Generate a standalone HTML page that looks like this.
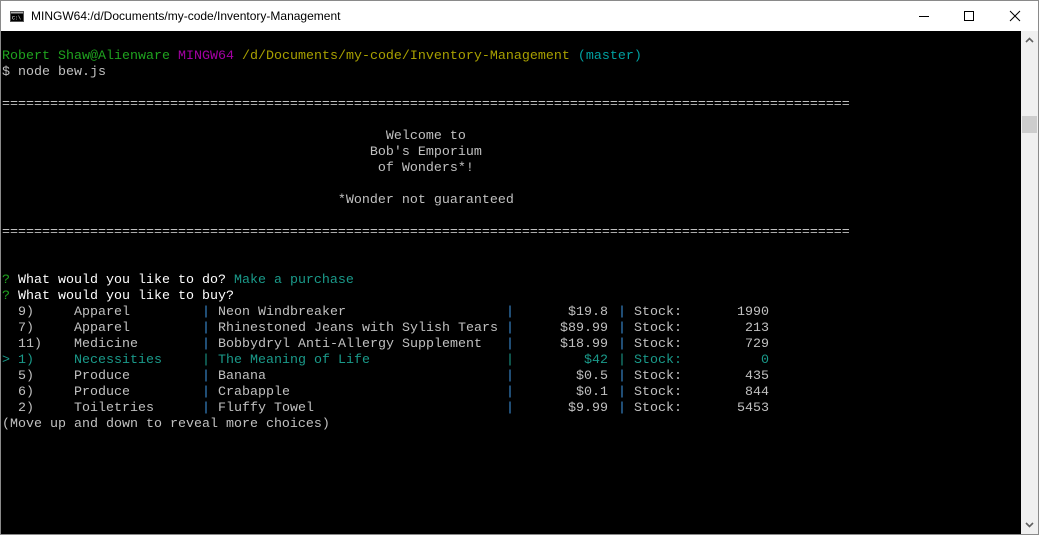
<!DOCTYPE html><html><head><meta charset="utf-8"><style>
*{margin:0;padding:0;box-sizing:border-box}
body{width:1039px;height:535px;overflow:hidden;background:#fff;position:relative;font-family:"Liberation Sans",sans-serif}
#frame{position:absolute;left:0;top:0;width:1039px;height:535px;border:1px solid #8a8a8a}
#title{position:absolute;left:1px;top:1px;width:1037px;height:30px;background:#fff}
#title .t{position:absolute;left:30px;top:8px;font-size:12px;color:#000}
#term{position:absolute;left:1px;top:31px;width:1020px;height:503px;background:#000;font-family:"Liberation Mono",monospace;font-size:13.333px;color:#c0c0c0}
.l{position:absolute;left:1px;width:1000px;height:16px;line-height:16px;white-space:pre;margin-top:2px}
.a{position:absolute;top:0;white-space:pre}
.r{position:absolute;top:0;white-space:pre;text-align:right}
.g{color:#1fa31f}.m{color:#a500a5}.y{color:#a8a000}.c{color:#00a0a0}.w{color:#fff}.tl{color:#1a9a8a}.p{color:#3b8ed6}
.sel,.sel .p{color:#1a9a8a}
.pr{right:394px}.st{right:233px}
#sb{position:absolute;left:1021px;top:31px;width:17px;height:503px;background:#f0f0f0}
</style></head><body>
<div id="frame"></div>
<div id="title">
<svg style="position:absolute;left:9px;top:10px" width="14" height="11" viewBox="0 0 14 11"><rect x="0.5" y="0.5" width="13" height="10" fill="#000" stroke="#555"/><rect x="1" y="1" width="12" height="1.5" fill="#aaa"/><text x="2" y="8.5" font-size="5" fill="#fff" font-family="Liberation Mono">C:\</text></svg>
<div class="t">MINGW64:/d/Documents/my-code/Inventory-Management</div>
<svg style="position:absolute;left:917px;top:9px" width="12" height="12"><line x1="1" y1="6.5" x2="11" y2="6.5" stroke="#000"/></svg>
<svg style="position:absolute;left:962px;top:9px" width="12" height="12"><rect x="1.5" y="1.5" width="9" height="9" fill="none" stroke="#000"/></svg>
<svg style="position:absolute;left:1008px;top:9px" width="12" height="12"><path d="M1 1L11 11M11 1L1 11" stroke="#000"/></svg>
</div>
<div id="term">
<div class="l" style="top:16px"><span class="g">Robert Shaw@Alienware</span> <span class="m">MINGW64</span> <span class="y">/d/Documents/my-code/Inventory-Management</span> <span class="c">(master)</span></div>
<div class="l" style="top:32px">$ node bew.js</div>
<div class="l" style="top:64px">==========================================================================================================</div>
<div class="l" style="top:96px">                                                Welcome to</div>
<div class="l" style="top:112px">                                              Bob's Emporium</div>
<div class="l" style="top:128px">                                               of Wonders*!</div>
<div class="l" style="top:160px">                                          *Wonder not guaranteed</div>
<div class="l" style="top:192px">==========================================================================================================</div>
<div class="l" style="top:240px"><span class="g">?</span> <span class="w">What would you like to do?</span> <span class="tl">Make a purchase</span></div>
<div class="l" style="top:256px"><span class="g">?</span> <span class="w">What would you like to buy?</span></div>

<div class="l" style="top:272px"><span class="a" style="left:16px">9)</span><span class="a" style="left:72px">Apparel</span><span class="a p" style="left:200px">|</span><span class="a" style="left:216px">Neon Windbreaker</span><span class="a p" style="left:504px">|</span><span class="r pr">$19.8</span><span class="a p" style="left:616px">|</span><span class="a" style="left:632px">Stock:</span><span class="r st">1990</span></div>
<div class="l" style="top:288px"><span class="a" style="left:16px">7)</span><span class="a" style="left:72px">Apparel</span><span class="a p" style="left:200px">|</span><span class="a" style="left:216px">Rhinestoned Jeans with Sylish Tears</span><span class="a p" style="left:504px">|</span><span class="r pr">$89.99</span><span class="a p" style="left:616px">|</span><span class="a" style="left:632px">Stock:</span><span class="r st">213</span></div>
<div class="l" style="top:304px"><span class="a" style="left:16px">11)</span><span class="a" style="left:72px">Medicine</span><span class="a p" style="left:200px">|</span><span class="a" style="left:216px">Bobbydryl Anti-Allergy Supplement</span><span class="a p" style="left:504px">|</span><span class="r pr">$18.99</span><span class="a p" style="left:616px">|</span><span class="a" style="left:632px">Stock:</span><span class="r st">729</span></div>
<div class="l sel" style="top:320px"><span class="a" style="left:0px">&gt;</span><span class="a" style="left:16px">1)</span><span class="a" style="left:72px">Necessities</span><span class="a p" style="left:200px">|</span><span class="a" style="left:216px">The Meaning of Life</span><span class="a p" style="left:504px">|</span><span class="r pr">$42</span><span class="a p" style="left:616px">|</span><span class="a" style="left:632px">Stock:</span><span class="r st">0</span></div>
<div class="l" style="top:336px"><span class="a" style="left:16px">5)</span><span class="a" style="left:72px">Produce</span><span class="a p" style="left:200px">|</span><span class="a" style="left:216px">Banana</span><span class="a p" style="left:504px">|</span><span class="r pr">$0.5</span><span class="a p" style="left:616px">|</span><span class="a" style="left:632px">Stock:</span><span class="r st">435</span></div>
<div class="l" style="top:352px"><span class="a" style="left:16px">6)</span><span class="a" style="left:72px">Produce</span><span class="a p" style="left:200px">|</span><span class="a" style="left:216px">Crabapple</span><span class="a p" style="left:504px">|</span><span class="r pr">$0.1</span><span class="a p" style="left:616px">|</span><span class="a" style="left:632px">Stock:</span><span class="r st">844</span></div>
<div class="l" style="top:368px"><span class="a" style="left:16px">2)</span><span class="a" style="left:72px">Toiletries</span><span class="a p" style="left:200px">|</span><span class="a" style="left:216px">Fluffy Towel</span><span class="a p" style="left:504px">|</span><span class="r pr">$9.99</span><span class="a p" style="left:616px">|</span><span class="a" style="left:632px">Stock:</span><span class="r st">5453</span></div>
<div class="l" style="top:384px">(Move up and down to reveal more choices)</div>
</div>
<div id="sb">
<svg style="position:absolute;left:4px;top:6px" width="9" height="6"><path d="M1 5L4.5 1.5L8 5" stroke="#606060" stroke-width="1.6" fill="none"/></svg>
<div style="position:absolute;left:1px;top:85px;width:15px;height:17px;background:#cdcdcd"></div>
<svg style="position:absolute;left:4px;top:491px" width="9" height="6"><path d="M1 1L4.5 4.5L8 1" stroke="#606060" stroke-width="1.6" fill="none"/></svg>
</div>
</body></html>
